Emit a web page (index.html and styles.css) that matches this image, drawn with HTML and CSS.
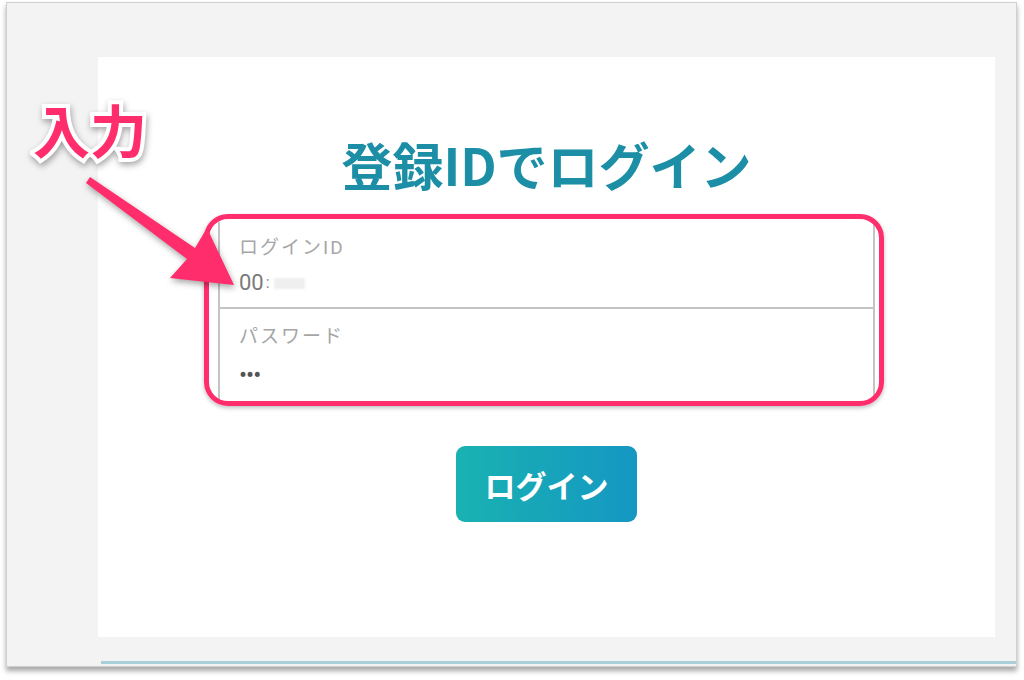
FILE: index.html
```html
<!DOCTYPE html>
<html lang="ja">
<head>
    <meta charset="UTF-8">
    <meta name="viewport" content="width=device-width, initial-scale=1.0">
    <title>登録IDでログイン</title>
    <link rel="stylesheet" href="styles.css">
</head>
<body>
    <div class="page">
        <!-- Screenshot frame -->
        <div class="frame">
            <div class="card">
                <h1 class="title">登録IDでログイン</h1>

                <div class="fields">
                    <div class="field field-id">
                        <label class="field-label">ログインID</label>
                        <div class="field-value">00<span class="cut">:</span><span class="masked"></span></div>
                    </div>
                    <div class="field field-pass">
                        <label class="field-label">パスワード</label>
                        <div class="field-dots">•••</div>
                    </div>
                </div>

                <button class="login-btn">ログイン</button>
            </div>
            <div class="strip"></div>
        </div>

        <!-- Annotation -->
        <div class="note">入力</div>
        <svg class="arrow" width="260" height="300" viewBox="0 0 260 300">
            <polygon points="90,175 195,246 207,226 234,283 170,276 187,257 86,181" fill="#ff2d6b"/>
        </svg>
    </div>
</body>
</html>
```

FILE: styles.css
```css
/* Global */
* {
    margin: 0;
    padding: 0;
    box-sizing: border-box;
}

body {
    font-family: "Noto Sans CJK JP", "Noto Sans", sans-serif;
    background-color: #fff;
    width: 1024px;
    height: 680px;
    overflow: hidden;
}

.page {
    position: relative;
    width: 1024px;
    height: 680px;
}

/* Screenshot frame */
.frame {
    margin: 2px 0 0 6px;
    width: 1011px;
    height: 665px;
    background-color: #f3f3f3;
    border: 1px solid #cfcfcf;
    box-shadow: 0 4px 5px rgba(0, 0, 0, 0.35);
    display: flex;
    flex-direction: column;
}

.card {
    margin: 54px 21px 0 91px;
    height: 580px;
    background-color: #fff;
    display: flex;
    flex-direction: column;
    align-items: center;
    padding-top: 77px;
}

.title {
    font-size: 51px;
    line-height: 60px;
    font-weight: 700;
    color: #1c8fa6;
}

/* Form fields */
.fields {
    position: relative;
    width: 657px;
    margin-top: 28px;
    border-left: 2px solid #c4c4c4;
    border-right: 2px solid #c4c4c4;
    font-family: Roboto, "Noto Sans CJK JP", sans-serif;
}

.fields::after {
    content: "";
    position: absolute;
    top: -8px;
    left: -16px;
    right: -11px;
    bottom: -6px;
    border: 5px solid #ff2d6b;
    border-radius: 24px;
    box-shadow: 0 2px 4px rgba(0, 0, 0, 0.25);
}

.field {
    padding-left: 19px;
}

.field-id {
    height: 87px;
    padding-top: 15px;
    border-bottom: 2px solid #c4c4c4;
}

.field-pass {
    height: 91px;
    padding-top: 17px;
}

.field-label {
    display: block;
    font-size: 19px;
    line-height: 22px;
    letter-spacing: 2px;
    color: #a6a6a6;
}

.field-value {
    margin-top: 11px;
    font-size: 22px;
    line-height: 26px;
    color: #7a7a7a;
    display: flex;
    align-items: center;
}

.field-value .cut {
    color: #888;
    font-size: 16px;
    margin-left: 2px;
}

.field-value .masked {
    display: inline-block;
    width: 31px;
    height: 11px;
    margin-left: 4px;
    background-color: #efefef;
    filter: blur(1px);
}

.field-dots {
    margin-top: 15px;
    font-size: 24px;
    line-height: 24px;
    color: #555;
    letter-spacing: -1px;
}

/* Button */
.login-btn {
    margin-top: 46px;
    width: 181px;
    height: 76px;
    border: none;
    border-radius: 9px;
    background: linear-gradient(to right, #19b2b1, #1597c3);
    color: #fff;
    font-family: "Noto Sans CJK JP", "Noto Sans", sans-serif;
    font-size: 31px;
    font-weight: 700;
}

.strip {
    margin: 24px 0 0 94px;
    height: 3px;
    background-color: #a9d0d9;
}

/* Annotation */
.note {
    position: absolute;
    left: 33px;
    top: 90px;
    font-size: 57px;
    line-height: 72px;
    font-weight: 700;
    color: #ff2d6b;
    -webkit-text-stroke: 8px #fff;
    paint-order: stroke fill;
    filter: drop-shadow(1px 3px 3px rgba(0, 0, 0, 0.35));
}

.arrow {
    position: absolute;
    left: 0;
    top: 0;
    filter: drop-shadow(1px 3px 3px rgba(0, 0, 0, 0.35));
}
```
